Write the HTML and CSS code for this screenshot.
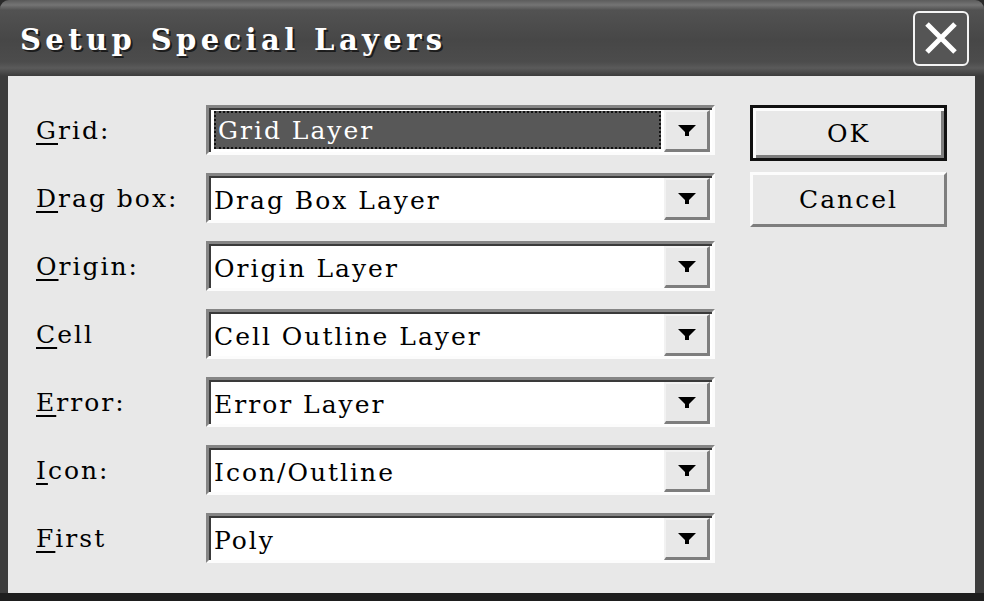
FILE: index.html
```html
<!DOCTYPE html>
<html lang="en">
<head>
    <meta charset="UTF-8">
    <title>Setup Special Layers</title>
    <link rel="stylesheet" href="styles.css">
</head>
<body>
    <div class="window">
        <!-- title bar -->
        <div class="titlebar">
            <span class="title">Setup Special Layers</span>
            <div class="close-btn">
                <svg width="34" height="32" viewBox="0 0 34 32">
                    <path d="M3 2 L31 30 M31 2 L3 30" stroke="#fff" stroke-width="5" fill="none"/>
                </svg>
            </div>
        </div>

        <!-- dialog body -->
        <div class="client">
            <div class="fields">
                <div class="row">
                    <label class="label"><u>G</u>rid:</label>
                    <div class="combo">
                        <div class="field"><span class="selected">Grid Layer</span></div>
                        <div class="drop"><svg width="18" height="11" viewBox="0 0 18 11"><path d="M0 0 H18 L11 7 V11 H7 V7 Z" fill="#000"/></svg></div>
                    </div>
                </div>
                <div class="row">
                    <label class="label"><u>D</u>rag box:</label>
                    <div class="combo">
                        <div class="field">Drag Box Layer</div>
                        <div class="drop"><svg width="18" height="11" viewBox="0 0 18 11"><path d="M0 0 H18 L11 7 V11 H7 V7 Z" fill="#000"/></svg></div>
                    </div>
                </div>
                <div class="row">
                    <label class="label"><u>O</u>rigin:</label>
                    <div class="combo">
                        <div class="field">Origin Layer</div>
                        <div class="drop"><svg width="18" height="11" viewBox="0 0 18 11"><path d="M0 0 H18 L11 7 V11 H7 V7 Z" fill="#000"/></svg></div>
                    </div>
                </div>
                <div class="row">
                    <label class="label"><u>C</u>ell</label>
                    <div class="combo">
                        <div class="field">Cell Outline Layer</div>
                        <div class="drop"><svg width="18" height="11" viewBox="0 0 18 11"><path d="M0 0 H18 L11 7 V11 H7 V7 Z" fill="#000"/></svg></div>
                    </div>
                </div>
                <div class="row">
                    <label class="label"><u>E</u>rror:</label>
                    <div class="combo">
                        <div class="field">Error Layer</div>
                        <div class="drop"><svg width="18" height="11" viewBox="0 0 18 11"><path d="M0 0 H18 L11 7 V11 H7 V7 Z" fill="#000"/></svg></div>
                    </div>
                </div>
                <div class="row">
                    <label class="label"><u>I</u>con:</label>
                    <div class="combo">
                        <div class="field">Icon/Outline</div>
                        <div class="drop"><svg width="18" height="11" viewBox="0 0 18 11"><path d="M0 0 H18 L11 7 V11 H7 V7 Z" fill="#000"/></svg></div>
                    </div>
                </div>
                <div class="row">
                    <label class="label"><u>F</u>irst</label>
                    <div class="combo">
                        <div class="field">Poly</div>
                        <div class="drop"><svg width="18" height="11" viewBox="0 0 18 11"><path d="M0 0 H18 L11 7 V11 H7 V7 Z" fill="#000"/></svg></div>
                    </div>
                </div>
            </div>

            <div class="buttons">
                <button class="btn default">OK</button>
                <button class="btn">Cancel</button>
            </div>
        </div>
    </div>
</body>
</html>
```

FILE: styles.css
```css
/* dialog window */
html, body {
    margin: 0;
    padding: 0;
    background: #2a2a2a;
}
body {
    width: 984px;
    height: 601px;
    overflow: hidden;
}
.window {
    box-sizing: border-box;
    width: 984px;
    height: 601px;
    display: flex;
    flex-direction: column;
    background: #3c3c3c;
    border-radius: 9px 9px 0 0;
    border-bottom: 8px solid #1e1e1e;
}
/* title bar */
.titlebar {
    height: 76px;
    flex: none;
    display: flex;
    align-items: center;
    justify-content: space-between;
    padding: 0 15px 0 20px;
    border-radius: 9px 9px 0 0;
    background: linear-gradient(to bottom, #5c5c5c 0px, #747474 5px, #525252 10px, #474747 40px, #4c4c4c 62px, #5a5a5a 68px, #3c3c3c 76px);
}
.title {
    font-family: "DejaVu Serif", serif;
    font-weight: bold;
    font-size: 29px;
    letter-spacing: 4.4px;
    color: #fff;
    text-shadow: 2px 2px 0 #1c1c1c;
    margin-top: 4px;
}
.close-btn {
    width: 52px;
    height: 51px;
    border: 2px solid #f4f4f4;
    border-radius: 6px;
    background: #555;
    display: flex;
    align-items: center;
    justify-content: center;
}
/* client area */
.client {
    flex: 1;
    display: flex;
    margin: 0 9px 0 8px;
    padding: 29px 0 0 28px;
    background: #e8e8e8;
    font-family: "DejaVu Serif", serif;
    font-size: 25px;
    letter-spacing: 2px;
    color: #000;
}
.fields {
    display: flex;
    flex-direction: column;
    gap: 18px;
}
.row {
    display: flex;
    align-items: center;
}
.label {
    width: 170px;
}
.label u {
    text-decoration-thickness: 2px;
    text-underline-offset: 4px;
}
/* combo box */
.combo {
    box-sizing: border-box;
    width: 509px;
    height: 50px;
    display: flex;
    border: 3px solid;
    border-color: #858585 #fcfcfc #fcfcfc #858585;
    box-shadow: inset 2px 2px 0 #3a3a3a;
    padding: 2px 2px 0 2px;
    background: #fff;
}
.field {
    flex: 1;
    display: flex;
    align-items: center;
    padding-left: 3px;
    padding-top: 2px;
}
.selected {
    box-sizing: border-box;
    align-self: stretch;
    flex: 1;
    margin: -1px 3px 3px 0;
    padding-left: 2px;
    display: flex;
    align-items: center;
    background: #585858;
    color: #fff;
    border: 2px dotted #111;
}
.drop {
    box-sizing: border-box;
    width: 46px;
    display: flex;
    align-items: center;
    justify-content: center;
    background: #e8e8e8;
    border-top: 2px solid #f2f2f2;
    border-left: 2px solid #f2f2f2;
    border-right: 3px solid #7e7e7e;
    border-bottom: 3px solid #7e7e7e;
}
/* buttons */
.buttons {
    display: flex;
    flex-direction: column;
    gap: 11px;
    margin-left: 35px;
}
.btn {
    box-sizing: border-box;
    width: 197px;
    height: 55px;
    font-family: "DejaVu Serif", serif;
    font-size: 25px;
    letter-spacing: 2px;
    color: #000;
    background: #e8e8e8;
    border: 3px solid;
    border-color: #fcfcfc #7e7e7e #7e7e7e #fcfcfc;
    padding: 0;
}
.btn.default {
    height: 56px;
    border: 3px solid #111;
    box-shadow: inset 3px 3px 0 #fcfcfc, inset -3px -3px 0 #7e7e7e;
}
```
